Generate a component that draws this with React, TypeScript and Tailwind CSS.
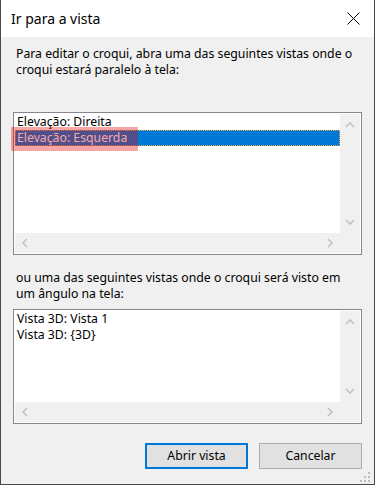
import React from 'react';

const font = { fontFamily: '"Segoe UI", "Noto Sans", sans-serif' };

const Chevron = ({ dir }: { dir: 'up' | 'down' | 'left' | 'right' }) => {
    const pts = {
        up: '1,6 5,2 9,6',
        down: '1,2 5,6 9,2',
        left: '6,1 2,5 6,9',
        right: '2,1 6,5 2,9',
    }[dir];
    const vertical = dir === 'up' || dir === 'down';
    return (
        <svg width={vertical ? 10 : 8} height={vertical ? 8 : 10} viewBox={vertical ? '0 0 10 8' : '0 0 8 10'}>
            <polyline points={pts} fill="none" stroke="#c2c2c2" strokeWidth="1.6" />
        </svg>
    );
};

const ListBox = ({ height, children }: { height: string; children: React.ReactNode }) => (
    <div className={`border border-[#828790] bg-white p-px flex flex-col ${height}`}>
        <div className="flex flex-1 min-h-0">
            <div className="flex-1 flex flex-col">{children}</div>
            <div className="w-[20px] bg-[#f0f0f0] flex flex-col items-center justify-between pt-[7px] pb-[7px]">
                <Chevron dir="up" />
                <Chevron dir="down" />
            </div>
        </div>
        <div className="h-[20px] flex bg-[#f0f0f0]">
            <div className="flex-1 flex items-center justify-between pl-[6px] pr-[6px]">
                <Chevron dir="left" />
                <Chevron dir="right" />
            </div>
            <div className="w-[20px]" />
        </div>
    </div>
);

const Row = ({ text, selected }: { text: string; selected?: boolean }) => (
    <div
        className={`h-[16px] leading-[16px] pl-[2px] text-[12.25px] whitespace-nowrap ${
            selected ? 'bg-[#0078d7] text-white outline outline-1 outline-dotted outline-[#f7a541] -outline-offset-1' : 'text-black'
        }`}
    >
        {text}
    </div>
);

export default function App() {
    return (
        <div className="relative w-[375px] h-[485px] flex flex-col bg-white border-l border-r border-b border-[#494949] text-black" style={font}>
            {/* Title bar */}
            <div className="h-[37px] flex items-center justify-between pl-[10px] pr-[14px] bg-white">
                <span className="text-[14px] leading-none">Ir para a vista</span>
                <svg width="13" height="13" viewBox="0 0 13 13">
                    <path d="M0.5 0.5 L12.5 12.5 M12.5 0.5 L0.5 12.5" stroke="#000" strokeWidth="1" />
                </svg>
            </div>

            {/* Body */}
            <div className="flex-1 bg-[#f0f0f0] flex flex-col px-[12px]">
                <p className="mt-[9px] pl-[3px] text-[12.25px] leading-[16px]">
                    Para editar o croqui, abra uma das seguintes vistas onde o<br />
                    croqui estará paralelo à tela:
                </p>

                <div className="mt-[34px]">
                    <ListBox height="h-[143px]">
                        <Row text="Elevação: Direita" />
                        <Row text="Elevação: Esquerda" selected />
                    </ListBox>
                </div>

                <p className="mt-[15px] pl-[3px] text-[12.25px] leading-[16px]">
                    ou uma das seguintes vistas onde o croqui será visto em<br />
                    um ângulo na tela:
                </p>

                <div className="mt-[7px]">
                    <ListBox height="h-[115px]">
                        <Row text="Vista 3D: Vista 1" />
                        <Row text="Vista 3D: {3D}" />
                    </ListBox>
                </div>

                <div className="mt-[19px] flex justify-end gap-[11px]">
                    <button className="w-[103px] h-[26px] bg-[#e1e1e1] border-2 border-[#0078d7] text-[12.25px]">
                        Abrir vista
                    </button>
                    <button className="w-[103px] h-[26px] bg-[#e1e1e1] border border-[#adadad] text-[12.25px]">
                        Cancelar
                    </button>
                </div>
            </div>

            {/* Resize grip */}
            <div className="absolute right-[4px] bottom-[2px] grid grid-cols-3 gap-[2px]">
                <span className="w-[2px] h-[2px]" />
                <span className="w-[2px] h-[2px]" />
                <span className="w-[2px] h-[2px] bg-[#bcbcbc]" />
                <span className="w-[2px] h-[2px]" />
                <span className="w-[2px] h-[2px] bg-[#bcbcbc]" />
                <span className="w-[2px] h-[2px] bg-[#bcbcbc]" />
                <span className="w-[2px] h-[2px] bg-[#bcbcbc]" />
                <span className="w-[2px] h-[2px] bg-[#bcbcbc]" />
                <span className="w-[2px] h-[2px] bg-[#bcbcbc]" />
            </div>

            {/* Red annotation highlight */}
            <div className="absolute left-[10px] top-[127px] w-[127px] h-[24px] bg-[rgba(233,0,0,0.35)]" />
        </div>
    );
}
